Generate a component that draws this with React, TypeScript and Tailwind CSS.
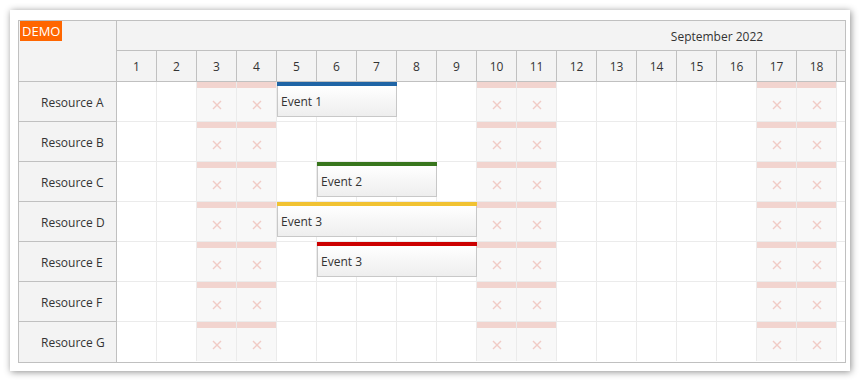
import React from "react";

const days = Array.from({ length: 18 }, (_, i) => i + 1);
const weekend = new Set([3, 4, 10, 11, 17, 18]);
const resources = ["Resource A", "Resource B", "Resource C", "Resource D", "Resource E", "Resource F", "Resource G"];

type Ev = { row: number; start: number; span: number; text: string; color: string };
const events: Ev[] = [
  { row: 0, start: 5, span: 3, text: "Event 1", color: "#1f64a5" },
  { row: 2, start: 6, span: 3, text: "Event 2", color: "#38761d" },
  { row: 3, start: 5, span: 5, text: "Event 3", color: "#f1c232" },
  { row: 4, start: 6, span: 4, text: "Event 3", color: "#cc0000" },
];

function XMark() {
  return (
    <svg width="10" height="10" viewBox="0 0 10 10">
      <path d="M1 1L9 9M9 1L1 9" stroke="#f1cbc5" strokeWidth="1.4" />
    </svg>
  );
}

export default function App() {
  return (
    <div
      className="w-[860px] h-[381px] bg-white overflow-hidden pt-[10px] pl-[10px] text-[12px] text-[#333]"
      style={{ fontFamily: '"Open Sans", "Noto Sans", sans-serif' }}
    >
      <div className="w-[840px] h-[361px] bg-white shadow-[1px_1px_7px_rgba(0,0,0,0.45)] pt-[10px] pl-[8px]">
        <div className="w-[828px] h-[343px] border border-[#c0c0c0] flex bg-white">
          {/* Row headers */}
          <div className="w-[98px] shrink-0 border-r border-[#c0c0c0] bg-[#f3f3f3] flex flex-col">
            <div className="h-[61px] border-b border-[#c0c0c0] pl-[1px]">
              <div className="inline-block bg-[#ff6600] text-white text-[13px] leading-[20px] px-[2px] h-[20px]">DEMO</div>
            </div>
            {resources.map((r, i) => (
              <div
                key={r}
                className={`flex items-center pl-[22px] pt-[2px] ${i < resources.length - 1 ? "h-[40px] border-b border-[#c0c0c0]" : "h-[39px]"}`}
              >
                {r}
              </div>
            ))}
          </div>
          {/* Timeline */}
          <div className="flex-1 overflow-hidden flex flex-col">
            <div className="h-[30px] border-b border-[#c0c0c0] bg-[#f3f3f3] flex shrink-0">
              <div className="w-[1200px] shrink-0 flex items-center justify-center pt-[2px]">September 2022</div>
            </div>
            <div className="h-[31px] border-b border-[#c0c0c0] bg-[#f3f3f3] flex shrink-0">
              {days.map((d) => (
                <div key={d} className="w-[40px] shrink-0 border-r border-[#c0c0c0] flex items-center justify-center pt-[2px]">
                  {d}
                </div>
              ))}
            </div>
            <div className="relative flex-1">
              {resources.map((r, i) => (
                <div
                  key={r}
                  className={`flex ${i < resources.length - 1 ? "h-[40px] border-b border-[#ebebeb]" : "h-[39px]"}`}
                >
                  {days.map((d) =>
                    weekend.has(d) ? (
                      <div key={d} className="w-[40px] shrink-0 border-r border-[#ebebeb] bg-[#f8f8f8] flex flex-col">
                        <div className="h-[6px] bg-[#f2d4cf]" />
                        <div className="flex-1 flex items-center justify-center pt-[1px]">
                          <XMark />
                        </div>
                      </div>
                    ) : (
                      <div key={d} className="w-[40px] shrink-0 border-r border-[#ebebeb]" />
                    )
                  )}
                </div>
              ))}
              {events.map((e, k) => (
                <div
                  key={k}
                  className="absolute h-[35px] flex flex-col"
                  style={{ top: e.row * 40, left: (e.start - 1) * 40, width: e.span * 40 }}
                >
                  <div className="h-[4px] shrink-0" style={{ backgroundColor: e.color }} />
                  <div className="flex-1 border-x border-b border-[#c8c8c8] bg-gradient-to-b from-white to-[#eeeeee] flex items-center pl-[3px] pt-[1px]">
                    {e.text}
                  </div>
                </div>
              ))}
            </div>
          </div>
        </div>
      </div>
    </div>
  );
}
